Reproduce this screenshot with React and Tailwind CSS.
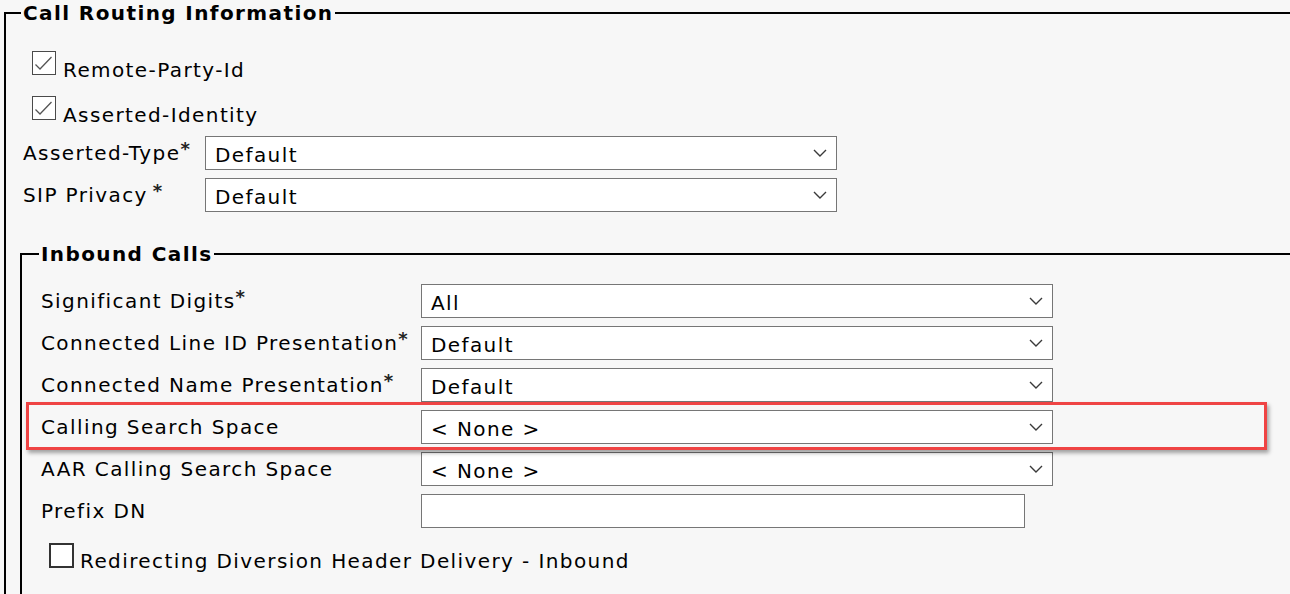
import React from 'react'

const Chevron = () => (
  <svg width="14" height="8" viewBox="0 0 14 8" className="shrink-0">
    <path d="M1 1 L7 7 L13 1" fill="none" stroke="#3a3a3a" strokeWidth="1.4" />
  </svg>
)

const Checkbox = ({ checked }) =>
  checked ? (
    <div className="h-[24px] w-[24px] shrink-0 border-[1.5px] border-[#4a4a4a] bg-white">
      <svg width="21" height="21" viewBox="0 0 21 21">
        <path d="M2.5 12.5 L7 17 L18.5 5" fill="none" stroke="#555" strokeWidth="1.3" />
      </svg>
    </div>
  ) : (
    <div className="h-[25px] w-[25px] shrink-0 border-2 border-[#333] bg-white"></div>
  )

const Req = ({ gap }) => (
  <sup className={`top-[-5px] text-[18px] font-bold tracking-normal text-[#222] ${gap ? 'ml-[5px]' : 'ml-0'}`}>*</sup>
)

const Select = ({ value }) => (
  <div className="flex h-[34px] w-[632px] shrink-0 items-center border border-[#767676] bg-white pl-[9px] pr-[9px]">
    <span className="mt-[4px] leading-[24px]">{value}</span>
    <span className="ml-auto">
      <Chevron />
    </span>
  </div>
)

const Row = ({ label, req, gap, labelW, children }) => (
  <div className="flex items-start">
    <div className={`${labelW} shrink-0 whitespace-nowrap pt-[5px] leading-[24px]`}>
      {label}
      {req && <Req gap={gap} />}
    </div>
    {children}
  </div>
)

export default function App() {
  return (
    <div className="h-[594px] w-[1290px] overflow-hidden bg-[#f7f7f7] font-['DejaVu_Sans',Verdana,sans-serif] text-[20px] tracking-[1.4px] text-black">
      <fieldset className="ml-[4px] min-h-[700px] w-[1330px] border-2 border-black">
        <legend className="ml-[15px] px-[2px] text-[20px] font-bold leading-[26px]">Call Routing Information</legend>

        <div className="ml-[26px] mt-[25px] flex items-baseline">
          <Checkbox checked />
          <span className="ml-[7px] translate-y-[2px] leading-[24px]">Remote-Party-Id</span>
        </div>
        <div className="ml-[26px] mt-[16px] flex items-baseline">
          <Checkbox checked />
          <span className="ml-[7px] translate-y-[2px] leading-[24px]">Asserted-Identity</span>
        </div>

        <div className="ml-[17px] mt-[11px] flex flex-col gap-[8px]">
          <Row label="Asserted-Type" req labelW="w-[182px]">
            <Select value="Default" />
          </Row>
          <Row label="SIP Privacy" req gap labelW="w-[182px]">
            <Select value="Default" />
          </Row>
        </div>

        <fieldset className="ml-[14px] mt-[29px] min-h-[400px] w-[1300px] border-2 border-black">
          <legend className="ml-[17px] px-[2px] text-[20px] font-bold leading-[26px]">Inbound Calls</legend>

          <div className="ml-[19px] mt-[17px] flex flex-col gap-[8px]">
            <Row label="Significant Digits" req labelW="w-[380px]">
              <Select value="All" />
            </Row>
            <Row label="Connected Line ID Presentation" req labelW="w-[380px]">
              <Select value="Default" />
            </Row>
            <Row label="Connected Name Presentation" req labelW="w-[380px]">
              <Select value="Default" />
            </Row>
            <div className="relative">
              <Row label="Calling Search Space" labelW="w-[380px]">
                <Select value="< None >" />
              </Row>
              <div className="pointer-events-none absolute left-[-15px] top-[-8px] h-[48px] w-[1241px] border-[3px] border-[#ef4444] shadow-[2px_3px_4px_rgba(0,0,0,0.35)]"></div>
            </div>
            <Row label="AAR Calling Search Space" labelW="w-[380px]">
              <Select value="< None >" />
            </Row>
            <Row label="Prefix DN" labelW="w-[380px]">
              <div className="h-[34px] w-[604px] border border-[#767676] bg-white"></div>
            </Row>
          </div>

          <div className="ml-[27px] mt-[15px] flex items-baseline">
            <Checkbox />
            <span className="ml-[6px] leading-[24px]">Redirecting Diversion Header Delivery - Inbound</span>
          </div>
        </fieldset>
      </fieldset>
    </div>
  )
}
